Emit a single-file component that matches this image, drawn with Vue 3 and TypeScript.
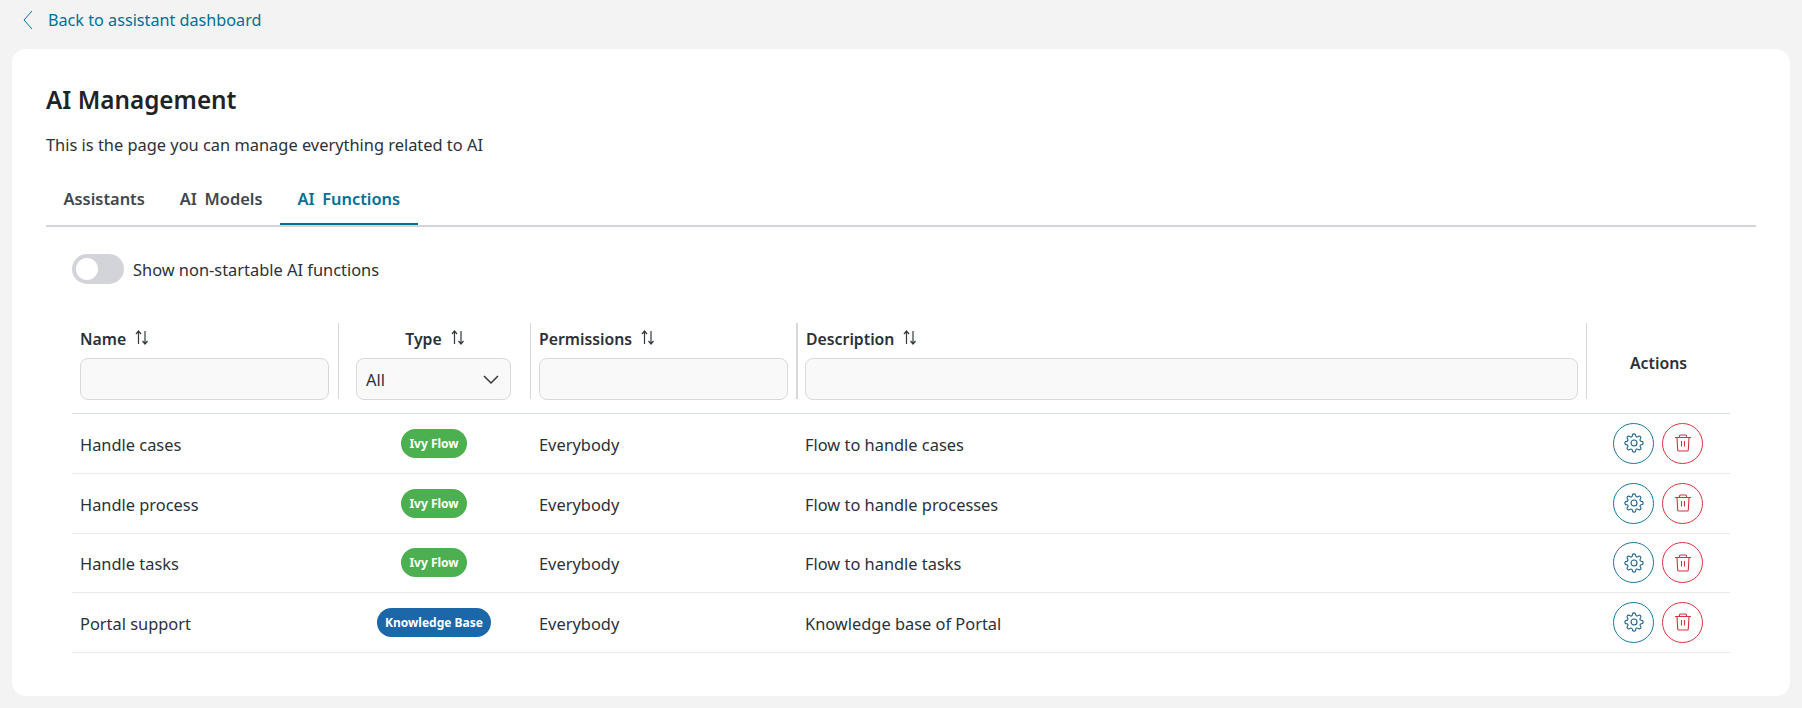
<script setup lang="ts">
import { ref } from 'vue';

interface AiFunction {
  name: string;
  type: string;
  permissions: string;
  description: string;
}

const tabs = ['Assistants', 'AI Models', 'AI Functions'];
const activeTab = ref('AI Functions');
const showAll = ref(false);

const rows: AiFunction[] = [
  { name: 'Handle cases', type: 'Ivy Flow', permissions: 'Everybody', description: 'Flow to handle cases' },
  { name: 'Handle process', type: 'Ivy Flow', permissions: 'Everybody', description: 'Flow to handle processes' },
  { name: 'Handle tasks', type: 'Ivy Flow', permissions: 'Everybody', description: 'Flow to handle tasks' },
  { name: 'Portal support', type: 'Knowledge Base', permissions: 'Everybody', description: 'Knowledge base of Portal' },
];

const gear =
  'M19.4 15a1.65 1.65 0 0 0 .33 1.82l.06.06a2 2 0 0 1 0 2.83 2 2 0 0 1-2.83 0l-.06-.06a1.65 1.65 0 0 0-1.82-.33 1.65 1.65 0 0 0-1 1.51V21a2 2 0 0 1-2 2 2 2 0 0 1-2-2v-.09A1.65 1.65 0 0 0 9 19.4a1.65 1.65 0 0 0-1.82.33l-.06.06a2 2 0 0 1-2.83 0 2 2 0 0 1 0-2.83l.06-.06a1.65 1.65 0 0 0 .33-1.82 1.65 1.65 0 0 0-1.51-1H3a2 2 0 0 1-2-2 2 2 0 0 1 2-2h.09A1.65 1.65 0 0 0 4.6 9a1.65 1.65 0 0 0-.33-1.82l-.06-.06a2 2 0 0 1 0-2.83 2 2 0 0 1 2.83 0l.06.06a1.65 1.65 0 0 0 1.82.33H9a1.65 1.65 0 0 0 1-1.51V3a2 2 0 0 1 2-2 2 2 0 0 1 2 2v.09a1.65 1.65 0 0 0 1 1.51 1.65 1.65 0 0 0 1.82-.33l.06-.06a2 2 0 0 1 2.83 0 2 2 0 0 1 0 2.83l-.06.06a1.65 1.65 0 0 0-.33 1.82V9a1.65 1.65 0 0 0 1.51 1H21a2 2 0 0 1 2 2 2 2 0 0 1-2 2h-.09a1.65 1.65 0 0 0-1.51 1z';
</script>

<template>
  <div class="page">
    <a class="back-link" href="#">
      <svg class="back-icon" width="10" height="20" viewBox="0 0 10 20" fill="none">
        <path d="M9 1 1 10l8 9" stroke="#007095" stroke-width="1" />
      </svg>
      Back to assistant dashboard
    </a>

    <div class="card">
      <h1 class="title">AI Management</h1>
      <p class="subtitle">This is the page you can manage everything related to AI</p>

      <div class="tabs">
        <div v-for="tab in tabs" :key="tab" :class="['tab', { active: tab === activeTab }]" @click="activeTab = tab">
          {{ tab }}
        </div>
      </div>

      <div class="panel">
        <div class="toggle-row">
          <button :class="['toggle', { on: showAll }]" @click="showAll = !showAll"><span class="knob"></span></button>
          <span>Show non-startable AI functions</span>
        </div>

        <table class="grid">
          <colgroup>
            <col style="width: 267px" />
            <col style="width: 192px" />
            <col style="width: 266px" />
            <col style="width: 790px" />
            <col style="width: 143px" />
          </colgroup>
          <thead>
            <tr>
              <th>
                <div class="th-title">Name <svg class="sort" width="14" height="15" viewBox="0 0 14 15" fill="none"><path d="M3.5 14V1.5M1 4l2.5-3L6 4M10 1v12.5M7.5 11l2.5 3 2.5-3" stroke="#33393f" stroke-width="1.2" /></svg></div>
                <input class="filter" type="text" />
              </th>
              <th class="center">
                <div class="th-title">Type <svg class="sort" width="14" height="15" viewBox="0 0 14 15" fill="none"><path d="M3.5 14V1.5M1 4l2.5-3L6 4M10 1v12.5M7.5 11l2.5 3 2.5-3" stroke="#33393f" stroke-width="1.2" /></svg></div>
                <div class="select">
                  <span>All</span>
                  <svg width="16" height="10" viewBox="0 0 16 10" fill="none"><path d="m1 1 7 7 7-7" stroke="#33393f" stroke-width="1.5" /></svg>
                </div>
              </th>
              <th>
                <div class="th-title">Permissions <svg class="sort" width="14" height="15" viewBox="0 0 14 15" fill="none"><path d="M3.5 14V1.5M1 4l2.5-3L6 4M10 1v12.5M7.5 11l2.5 3 2.5-3" stroke="#33393f" stroke-width="1.2" /></svg></div>
                <input class="filter" type="text" />
              </th>
              <th>
                <div class="th-title">Description <svg class="sort" width="14" height="15" viewBox="0 0 14 15" fill="none"><path d="M3.5 14V1.5M1 4l2.5-3L6 4M10 1v12.5M7.5 11l2.5 3 2.5-3" stroke="#33393f" stroke-width="1.2" /></svg></div>
                <input class="filter" type="text" />
              </th>
              <th class="center actions-head">Actions</th>
            </tr>
          </thead>
          <tbody>
            <tr v-for="row in rows" :key="row.name">
              <td>{{ row.name }}</td>
              <td class="center">
                <span :class="['badge', row.type === 'Ivy Flow' ? 'flow' : 'kb']">{{ row.type }}</span>
              </td>
              <td>{{ row.permissions }}</td>
              <td>{{ row.description }}</td>
              <td class="action-cell">
                <div class="actions">
                  <button class="round edit">
                    <svg width="20" height="20" viewBox="0 0 24 24" fill="none" stroke="#1a5f85" stroke-width="1.3">
                      <circle cx="12" cy="12" r="3.6" />
                      <path :d="gear" />
                    </svg>
                  </button>
                  <button class="round remove">
                    <svg width="18" height="18" viewBox="0 0 18 18" fill="none" stroke="#d5333f" stroke-width="1.1">
                      <path d="M1 3.5h16M5.5 3.5V2a1 1 0 0 1 1-1h5a1 1 0 0 1 1 1v1.5M3 3.5l.7 12.5a1 1 0 0 0 1 1h8.6a1 1 0 0 0 1-1L15 3.5M7.5 7v5.5M10.5 7v5.5" />
                    </svg>
                  </button>
                </div>
              </td>
            </tr>
          </tbody>
        </table>
      </div>
    </div>
  </div>
</template>

<style>
html,
body {
  margin: 0;
  background: #f3f3f3;
}
</style>

<style scoped>
.page {
  height: 708px;
  box-sizing: border-box;
  padding: 0 12px 12px;
  display: flex;
  flex-direction: column;
  font-family: "Noto Sans", "Open Sans", sans-serif;
  font-size: 16.4px;
  color: #2b3138;
}

.back-link {
  height: 49px;
  padding: 0 0 10px 11px;
  box-sizing: border-box;
  display: flex;
  align-items: center;
  gap: 15px;
  font-size: 16.2px;
  color: #007095;
  text-decoration: none;
}

.card {
  flex: 1;
  background: #fff;
  border-radius: 14px;
  padding: 0 34px;
}

.title {
  margin: 34px 0 0;
  font-size: 24.3px;
  line-height: 34px;
  font-weight: 600;
  color: #1f2328;
}

.subtitle {
  margin: 16px 0 0;
  line-height: 24px;
}

.tabs {
  display: flex;
  margin-top: 22px;
  border-bottom: 2px solid #d3d5da;
  height: 46px;
}

.tab {
  padding: 0 17.5px;
  height: 46px;
  box-sizing: border-box;
  line-height: 40px;
  font-weight: 600;
  word-spacing: 3.4px;
  color: #42474d;
  margin-bottom: -2px;
  cursor: pointer;
}

.tab.active {
  color: #007095;
  border-bottom: 2px solid #007095;
}

.panel {
  padding: 0 26px;
}

.toggle-row {
  display: flex;
  align-items: center;
  gap: 9px;
  margin-top: 27px;
}

.toggle {
  width: 52px;
  height: 30px;
  padding: 4px;
  border: none;
  border-radius: 15px;
  background: #d2d4d9;
  display: flex;
  cursor: pointer;
}

.toggle.on {
  justify-content: flex-end;
  background: #007095;
}

.knob {
  width: 22px;
  height: 22px;
  border-radius: 50%;
  background: #fff;
}

.grid {
  width: 1658px;
  margin-top: 39px;
  table-layout: fixed;
  border-collapse: collapse;
}

th {
  box-sizing: border-box;
  height: 90px;
  padding: 0;
  vertical-align: top;
  text-align: left;
  font-size: 15.8px;
  font-weight: 600;
  color: #2b3138;
  border-bottom: 1px solid #d4dde2;
  position: relative;
}

th:not(:last-child)::after {
  content: "";
  position: absolute;
  right: 0;
  top: 0;
  bottom: 14px;
  width: 1px;
  background: #d6d8dc;
}

th:nth-child(3)::after {
  right: -1px;
  width: 2px;
}

.th-title {
  display: flex;
  align-items: center;
  gap: 9px;
  height: 31px;
  padding: 0 9px;
}

th:first-child .th-title,
th:nth-child(3) .th-title {
  padding-left: 8px;
}

th.center .th-title {
  justify-content: center;
}

.sort {
  margin-top: -2px;
}

.filter,
.select {
  display: flex;
  box-sizing: border-box;
  height: 42px;
  margin: 4px 9px 0;
  width: calc(100% - 18px);
  background: #f9f9f9;
  border: 1px solid #d8d9dc;
  border-radius: 8px;
  outline: none;
}

th:first-child .filter {
  margin-left: 8px;
}

th:nth-child(3) .filter,
th:nth-child(4) .filter {
  margin-left: 8px;
  width: calc(100% - 17px);
}

.select {
  width: 155px;
  margin-left: 17px;
  padding: 1px 11px 0 9px;
  align-items: center;
  justify-content: space-between;
  font-size: 16.4px;
  font-weight: 400;
}

.actions-head {
  vertical-align: middle;
  padding-bottom: 9px;
}

td {
  box-sizing: border-box;
  height: 60px;
  padding: 2px 9px 0;
  border-bottom: 1px solid #e8eaeb;
}

tbody tr:nth-child(n + 3) td {
  height: 59.6px;
}

td:first-child,
td:nth-child(3),
td:nth-child(4) {
  padding-left: 8px;
}

td.center {
  padding: 0 10px 0 8px;
  text-align: center;
}

td.action-cell {
  padding-top: 0;
}

th.center {
  text-align: center;
}

.badge {
  display: inline-block;
  height: 29px;
  line-height: 29px;
  padding: 0 8px;
  border-radius: 15px;
  color: #fff;
  font-size: 12px;
  font-weight: 700;
}

.badge.flow {
  background: #4caf50;
}

.badge.kb {
  background: #1b67a8;
}

.actions {
  display: flex;
  gap: 8px;
  padding-left: 17px;
}

.round {
  width: 41px;
  height: 41px;
  padding: 0;
  border-radius: 50%;
  background: #fff;
  display: flex;
  align-items: center;
  justify-content: center;
  cursor: pointer;
}

.round.edit {
  border: 1px solid #16789c;
}

.round.remove {
  border: 1px solid #d9333f;
}
</style>
